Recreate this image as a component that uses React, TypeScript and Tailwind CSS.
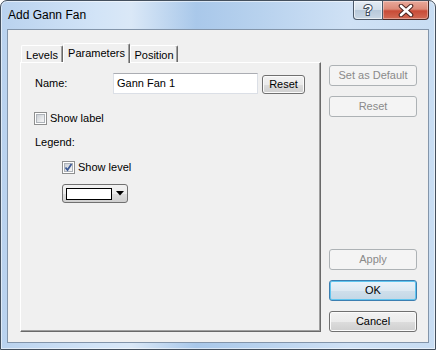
import React from "react";

const btnBase =
  "h-[21px] w-[88px] rounded-[3px] border text-[11px] flex items-center justify-center leading-none";
const btnEnabled =
  "border-[#707070] text-black bg-[linear-gradient(180deg,#f2f2f2_0%,#ebebeb_50%,#dddddd_51%,#cfcfcf_100%)] shadow-[inset_0_0_0_1px_#fbfbfb]";
const btnDisabled = "border-[#adb2b5] bg-[#f4f4f4] text-[#8a8a8a]";
const btnDefault =
  "border-[#3c7fb1] text-black bg-[linear-gradient(180deg,#eaf3fa_0%,#dde9f2_50%,#cfdfeb_51%,#c3d7e6_100%)] shadow-[inset_0_0_0_1px_#5fc5ef]";

function CheckBox({ checked }: { checked?: boolean }) {
  return (
    <div className="w-[13px] h-[13px] border border-[#8e8f8f] bg-white p-[1px] shrink-0 relative">
      <div className="w-full h-full border border-[#aeb3b9] bg-[linear-gradient(135deg,#cbcfd5_0%,#e6e8ea_60%,#f6f6f6_100%)]" />
      {checked && (
        <svg
          className="absolute left-[1px] top-[1px]"
          width="9"
          height="9"
          viewBox="0 0 9 9"
        >
          <path
            d="M1.5 4.5 L3.5 7 L7.5 1"
            fill="none"
            stroke="#3d5a96"
            strokeWidth="1.8"
          />
        </svg>
      )}
    </div>
  );
}

function Tab({
  label,
  selected,
  w,
}: {
  label: string;
  selected?: boolean;
  w: string;
}) {
  return (
    <div
      className={
        "relative bg-[#f0f0f0] rounded-t-[2px] border-l border-t border-r border-l-white border-t-white border-r-[#696969] shadow-[inset_-1px_0_0_#a0a0a0] flex justify-center text-[11px] leading-none " +
        w +
        (selected ? " h-[20px] -mb-[1px] pt-[4px] z-10" : " h-[17px] pt-[4px]")
      }
    >
      {label}
    </div>
  );
}

export default function App() {
  return (
    <div className="w-[436px] h-[350px] flex flex-col rounded-t-[7px] border border-[#44505e] bg-[linear-gradient(90deg,#b9d2ee_0%,#d2e4f7_22%,#dae8f7_30%,#a9c8ea_45%,#b8d2ee_60%,#cfe1f5_80%,#c8ddf3_100%)] font-['Liberation_Sans',Arial,sans-serif] text-black overflow-hidden shadow-[inset_0_0_0_1px_rgba(255,255,255,0.55)]">
      {/* title bar */}
      <div className="h-[28px] shrink-0 flex items-start">
        <span className="ml-[7px] mt-[7px] text-[12px] leading-[14px]">
          Add Gann Fan
        </span>
        <div className="ml-auto mr-[6px] flex">
          <div className="w-[30px] h-[19px] rounded-bl-[4px] border border-t-0 border-[#4b5868] bg-[linear-gradient(180deg,#e4ecf4_0%,#d3dfea_48%,#b8c9da_52%,#c9d7e4_100%)] shadow-[inset_0_0_0_1px_rgba(255,255,255,0.6)] flex items-center justify-center">
            <svg width="14" height="16" viewBox="0 0 14 16">
              <text
                x="7"
                y="13"
                textAnchor="middle"
                fontFamily="Liberation Sans, Arial, sans-serif"
                fontWeight="bold"
                fontSize="14"
                fill="#ffffff"
                stroke="#3e4a5a"
                strokeWidth="2"
                paintOrder="stroke"
              >
                ?
              </text>
            </svg>
          </div>
          <div className="w-[46px] h-[19px] rounded-br-[4px] border border-l-0 border-t-0 border-[#4b2a26] bg-[linear-gradient(180deg,#e9a99b_0%,#dc8a78_45%,#c84b37_55%,#d26a54_100%)] shadow-[inset_0_0_0_1px_rgba(255,255,255,0.35)] flex items-center justify-center">
            <svg width="16" height="13" viewBox="0 0 16 13">
              <path
                d="M3 2 L13 11 M13 2 L3 11"
                stroke="#4a2420"
                strokeWidth="4.6"
                strokeLinecap="round"
              />
              <path
                d="M3 2 L13 11 M13 2 L3 11"
                stroke="#ffffff"
                strokeWidth="2.6"
                strokeLinecap="round"
              />
            </svg>
          </div>
        </div>
      </div>

      {/* client area */}
      <div className="mx-[6px] flex-1 border border-[#8395aa] bg-[#f0f0f0] flex text-[11px]">
        {/* tab control */}
        <div className="ml-[12px] pt-[13px] w-[301px] flex flex-col">
          <div className="h-[19px] flex items-end pl-[1px] relative z-10">
            <Tab label="Levels" w="w-[42px]" />
            <Tab label="Parameters" w="w-[67px]" selected />
            <Tab label="Position" w="w-[48px]" />
          </div>
          <div className="h-[270px] border border-l-white border-t-white border-r-[#696969] border-b-[#696969] shadow-[inset_-1px_-1px_0_#a0a0a0] pl-[13px] pt-[10px] flex flex-col">
            <div className="flex h-[21px]">
              <span className="ml-[1px] w-[78px] self-center leading-none">
                Name:
              </span>
              <div className="w-[145px] h-[21px] bg-white border border-[#dbdfe6] border-t-[#abadb3] flex items-center pl-[3px] leading-none">
                Gann Fan 1
              </div>
              <div className="ml-[4px] mt-[2px] w-[43px] h-[19px] rounded-[3px] border border-[#707070] bg-[linear-gradient(180deg,#f2f2f2_0%,#ebebeb_50%,#dddddd_51%,#cfcfcf_100%)] shadow-[inset_0_0_0_1px_#fbfbfb] flex items-center justify-center leading-none">
                Reset
              </div>
            </div>

            <div className="mt-[18px] h-[13px] flex items-center">
              <CheckBox />
              <span className="ml-[3px] leading-none">Show label</span>
            </div>

            <div className="mt-[11px] h-[13px] ml-[1px] flex items-center leading-none">
              Legend:
            </div>

            <div className="mt-[12px] h-[13px] ml-[28px] flex items-center">
              <CheckBox checked />
              <span className="ml-[3px] leading-none">Show level</span>
            </div>

            <div className="mt-[10px] ml-[28px] w-[66px] h-[19px] rounded-[3px] border border-[#707070] bg-[linear-gradient(180deg,#f2f2f2_0%,#ebebeb_50%,#dddddd_51%,#cfcfcf_100%)] flex items-center pl-[3px]">
              <div className="w-[46px] h-[12px] bg-white border border-black" />
              <svg className="ml-[4px]" width="8" height="5" viewBox="0 0 8 5">
                <path d="M0 0 L8 0 L4 4.5 Z" fill="#000" />
              </svg>
            </div>
          </div>
        </div>

        {/* buttons column */}
        <div className="ml-[8px] w-[88px] pt-[35px] pb-[10px] flex flex-col">
          <div className={btnBase + " " + btnDisabled}>Set as Default</div>
          <div className={btnBase + " " + btnDisabled + " mt-[10px]"}>Reset</div>
          <div className="flex-1" />
          <div className={btnBase + " " + btnDisabled}>Apply</div>
          <div className={btnBase + " " + btnDefault + " mt-[10px]"}>OK</div>
          <div className={btnBase + " " + btnEnabled + " mt-[10px]"}>Cancel</div>
        </div>
      </div>
      <div className="h-[6px] shrink-0" />
    </div>
  );
}
